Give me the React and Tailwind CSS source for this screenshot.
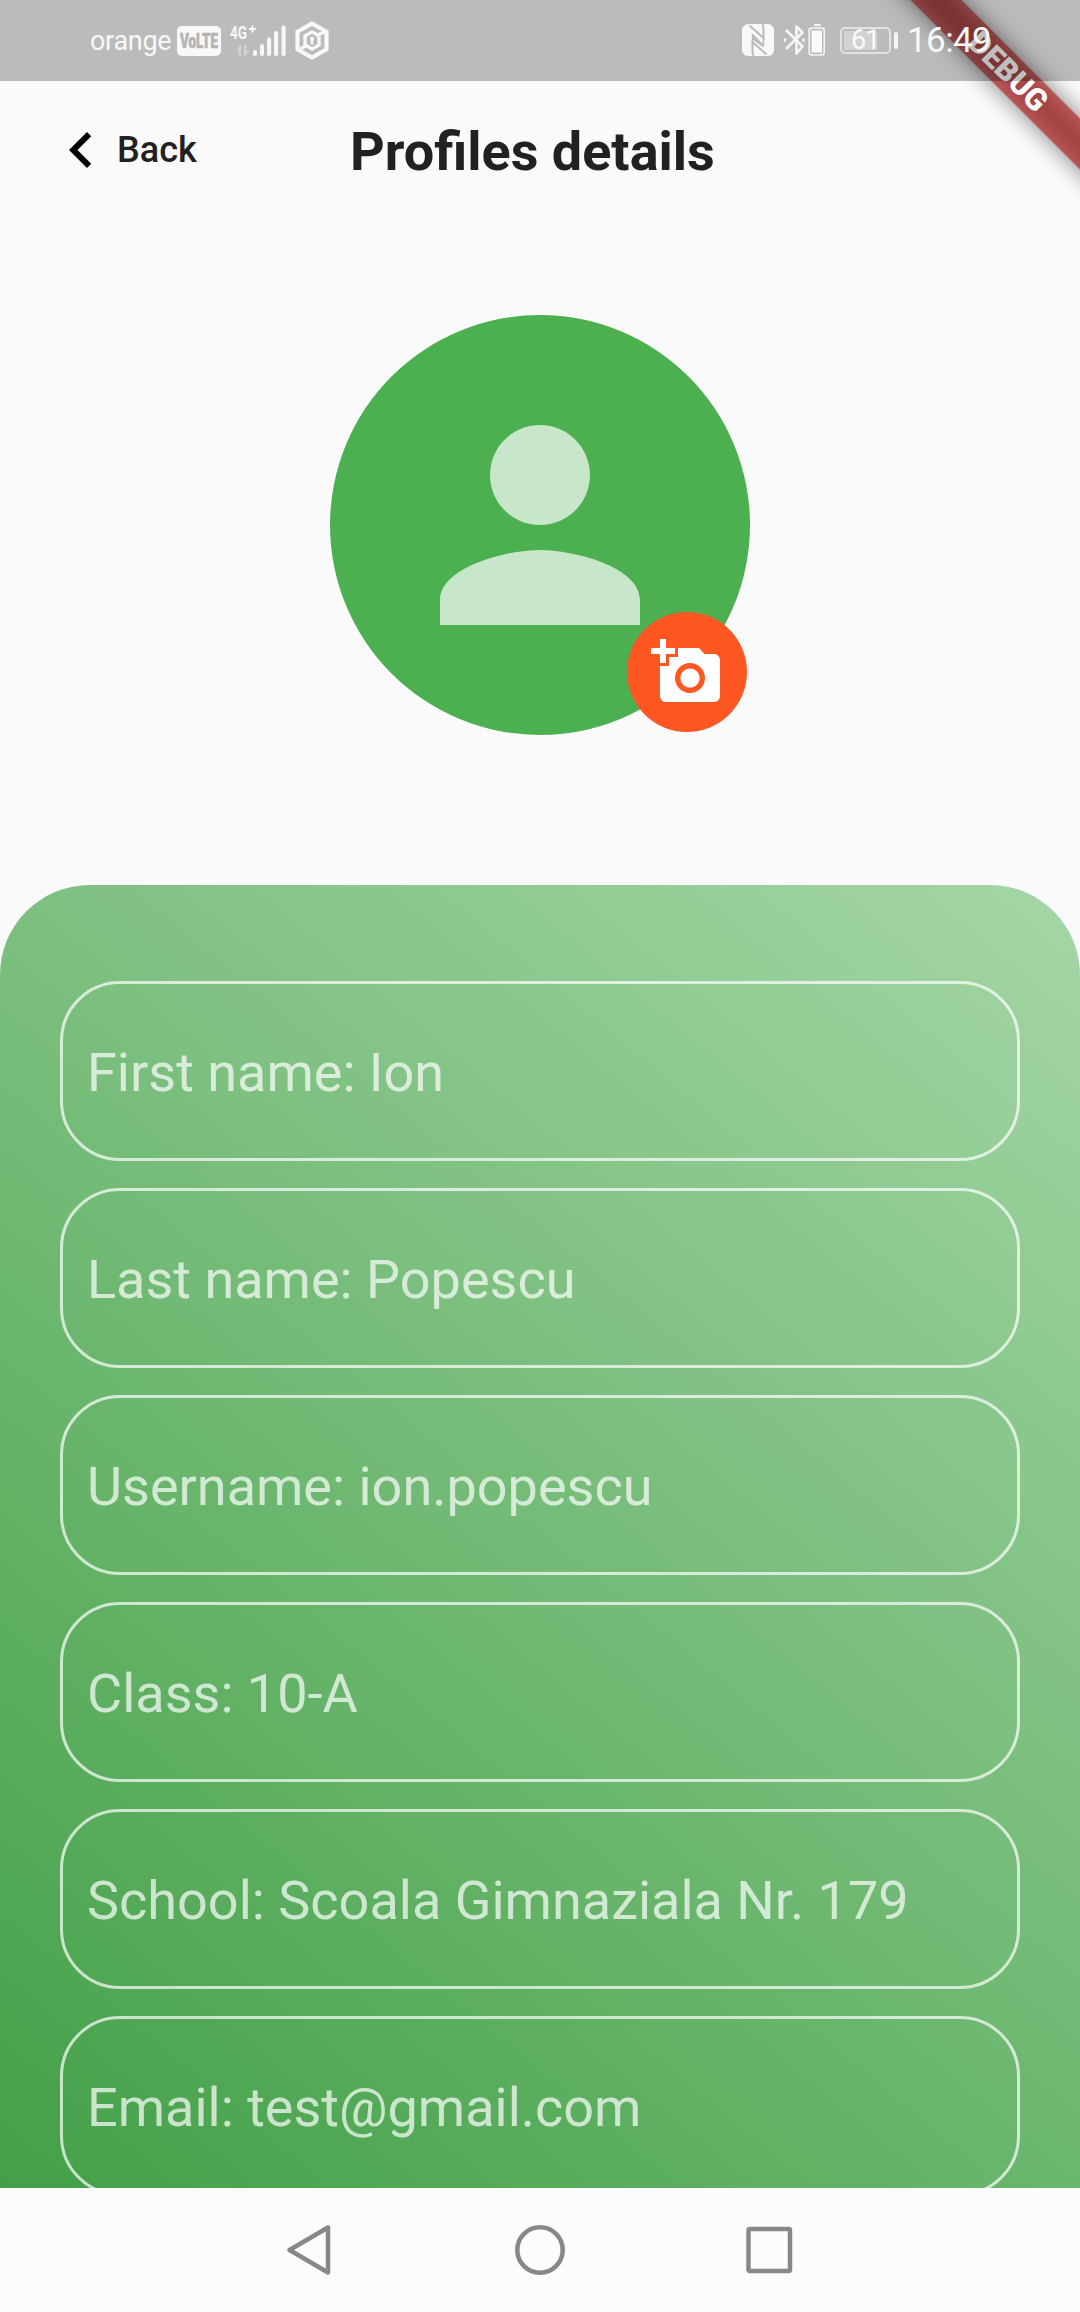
const fields = [
  'First name: Ion',
  'Last name: Popescu',
  'Username: ion.popescu',
  'Class: 10-A',
  'School: Scoala Gimnaziala Nr. 179',
  'Email: test@gmail.com',
];

function SignalIcon() {
  return (
    <svg width="60" height="36" viewBox="0 0 60 36" className="ml-2 shrink-0" fill="#f7f7f7">
      <text x="1" y="16" fontFamily="Roboto" fontWeight="700" fontSize="18.5" textLength="17" lengthAdjust="spacingAndGlyphs">4G</text>
      <path d="M20 5h7v2h-7zM22.500 2.500h2v7h-2z" />
      <path d="M7 27 12 21.500v11.500H9.500V27zM15 22h2.500v6H21l-6 5z" fill="#d2d2d2" />
      <rect x="24" y="27" width="4" height="6" rx="2" />
      <rect x="31" y="21" width="4" height="12" rx="2" />
      <rect x="38" y="14.500" width="4.200" height="18.500" rx="2" />
      <rect x="45" y="8" width="4.200" height="25" rx="2" />
      <rect x="52.500" y="2.500" width="4.200" height="30.500" rx="2" />
    </svg>
  );
}

function HexIcon() {
  return (
    <svg width="36" height="40" viewBox="0 0.500 36 40" className="ml-[5px] shrink-0" fill="none" stroke="#f8f8f8">
      <path d="M18 3 32.500 11.300V28.700L18 37 3.500 28.700V11.300Z" strokeWidth="4.200" />
      <path d="M25 16v8.500L18 28.600 11 24.500v-9L18 11.400l5 2.900" strokeWidth="3.400" />
      <path d="M22 15.500 31 11M14 24.500 5 29" strokeWidth="3.400" />
      <path d="M18 18v6" strokeWidth="2.600" />
      <circle cx="18" cy="18.500" r="2.200" fill="#f8f8f8" stroke="none" />
    </svg>
  );
}

function NfcIcon() {
  return (
    <svg width="32" height="34" viewBox="0 0 32 34" className="shrink-0">
      <rect width="32" height="32" rx="6" fill="#f8f8f8" />
      <path d="M7.500 1.500 21.500 14V5Q21.500 2 20.500 0M24.500 30.500 10.500 18V27Q10.500 30 11.500 32" fill="none" stroke="#bababa" strokeWidth="2" />
      <path d="M10.500 9.500 21.500 20.500V23.500L10.500 15.500Z" fill="#bababa" />
      <path d="M10.500 10V19M21.500 13V22" stroke="#bababa" strokeWidth="1.500" />
    </svg>
  );
}

function BluetoothIcon() {
  return (
    <svg width="42" height="34" viewBox="0 0 42 34" className="mb-px ml-[9px] shrink-0" fill="none" stroke="#f6f6f6">
      <path d="M3 7 19.500 23.500 13.500 30.500V3.500L19.500 9.500 3 26" strokeWidth="2.600" strokeLinejoin="round" />
      <path d="M1 14.500 4 17 1 19.500zM21.500 14.500 18.500 17l3 2.500z" fill="#f6f6f6" stroke="none" />
      <rect x="31" y="1" width="6.500" height="2" fill="#f6f6f6" stroke="none" />
      <rect x="26.200" y="5" width="15" height="27" rx="2.500" strokeWidth="1.600" />
      <rect x="28.500" y="7.500" width="10.500" height="22" fill="#fbfbfb" stroke="none" />
    </svg>
  );
}

function StatusBar() {
  return (
    <div className="relative z-20 flex h-[81px] shrink-0 items-center justify-between bg-black/25 pl-[90px] pr-[89px] text-[#f8f8f8]">
      <div className="flex items-center">
        <span className="w-[82px] text-[27px] leading-[34px] tracking-[-0.3px]">orange</span>
        <span className="ml-[5px] flex h-[30px] w-[44px] items-center justify-center rounded-[5px] bg-[#f8f8f8]">
          <svg width="40" height="24" viewBox="0 0 40 24">
            <text x="1" y="19" fill="#b4b4b4" stroke="#b4b4b4" strokeWidth="0.600" fontFamily="Roboto" fontWeight="900" fontSize="19.500" textLength="38" lengthAdjust="spacingAndGlyphs">VoLTE</text>
          </svg>
        </span>
        <SignalIcon />
        <HexIcon />
      </div>
      <div className="flex items-center">
        <NfcIcon />
        <BluetoothIcon />
        <span className="ml-[15px] flex h-[27px] w-[51px] items-center rounded-[5px] border-2 border-[#e2e2e2] p-[2px]">
          <span className="flex h-full w-[33px] items-center bg-[#d2d2d2] pl-[7px] text-[27px] leading-none tracking-[-1px] text-[#fafafa]">61</span>
        </span>
        <span className="ml-[3px] h-[17px] w-[4px] rounded-full bg-[#f4f4f4]" />
        <span className="ml-[9px] w-[84px] pt-px text-[35px] leading-[40px] tracking-[-0.6px]">16:49</span>
      </div>
    </div>
  );
}

function DebugBanner() {
  return (
    <div className="absolute right-0 top-0 h-[300px] w-[300px] overflow-hidden">
      <div className="absolute left-[28px] top-[54px] h-[36px] w-[400px] rotate-45 bg-black/50 blur-[11px]" />
      <div className="absolute left-[28px] top-[54px] flex h-[36px] w-[400px] rotate-45 items-center justify-center bg-[#B71C1C]/[0.627] text-[30.6px] font-black leading-none text-white">
        DEBUG
      </div>
    </div>
  );
}

export default function App() {
  return (
    <div className="relative flex h-[2312px] w-[1080px] flex-col overflow-hidden bg-[#fafafa] font-[Roboto,sans-serif]">
      <DebugBanner />
      <StatusBar />
      <header className="flex h-[138px] shrink-0 items-center">
        <svg width="72" height="72" viewBox="0 0 24 24" className="ml-[45px] shrink-0">
          <path d="M15.410 16.590 10.830 12l4.580-4.590L14 6l-6 6 6 6z" />
        </svg>
        <span className="w-[233px] text-[36px] font-medium leading-[42px] text-[#212121]">Back</span>
        <h1 className="pt-1 text-[54px] font-bold leading-[64px] text-[#212121]">Profiles details</h1>
      </header>
      <section className="flex h-[666px] shrink-0 justify-center pt-[96px]">
        <div className="relative flex h-[420px] w-[420px] items-center justify-center rounded-full bg-[#4CAF50]">
          <svg width="300" height="300" viewBox="0 0 24 24" fill="#C8E6C9">
            <path d="M12 12c2.210 0 4-1.790 4-4s-1.790-4-4-4-4 1.790-4 4 1.790 4 4 4zm0 2c-2.670 0-8 1.340-8 4v2h16v-2c0-2.660-5.330-4-8-4z" />
          </svg>
          <div className="absolute bottom-[3px] right-[3px] flex h-[120px] w-[120px] items-center justify-center rounded-full bg-[#FF5722]">
            <svg width="72" height="72" viewBox="0 0 24 24" fill="#fff">
              <path d="M3 4V1h2v3h3v2H5v3H3V6H0V4h3zm3 6V7h3V4h7l1.830 2H21c1.100 0 2 .9 2 2v12c0 1.100-.9 2-2 2H5c-1.100 0-2-.9-2-2V10h3zm7 9c2.760 0 5-2.240 5-5s-2.240-5-5-5-5 2.240-5 5 2.240 5 5 5zm-3.200-5c0 1.770 1.430 3.200 3.200 3.200s3.200-1.430 3.200-3.200-1.430-3.200-3.200-3.200-3.200 1.430-3.200 3.200z" />
            </svg>
          </div>
        </div>
      </section>
      <main className="flex h-[1303px] shrink-0 flex-col gap-[27px] overflow-hidden rounded-t-[90px] bg-[linear-gradient(39.65deg,#43A047,#A5D6A7)] px-[60px] pt-[96px]">
        {fields.map((text) => (
          <div key={text} className="flex h-[180px] shrink-0 items-center rounded-[60px] border-[3px] border-white/70 pl-6 pt-[3px] text-[54px] leading-[64px] text-white/70">
            {text}
          </div>
        ))}
      </main>
      <nav className="flex h-[124px] shrink-0 items-center justify-center bg-[#fcfcfc]">
        <svg width="510" height="56" viewBox="0 0 510 56" fill="none" stroke="#888" strokeWidth="4.500" strokeLinejoin="round">
          <path d="M43 5.500v45L4.500 28z" />
          <circle cx="255" cy="28" r="22.700" />
          <rect x="463.500" y="7" width="41.500" height="42" rx="1.500" />
        </svg>
      </nav>
    </div>
  );
}
